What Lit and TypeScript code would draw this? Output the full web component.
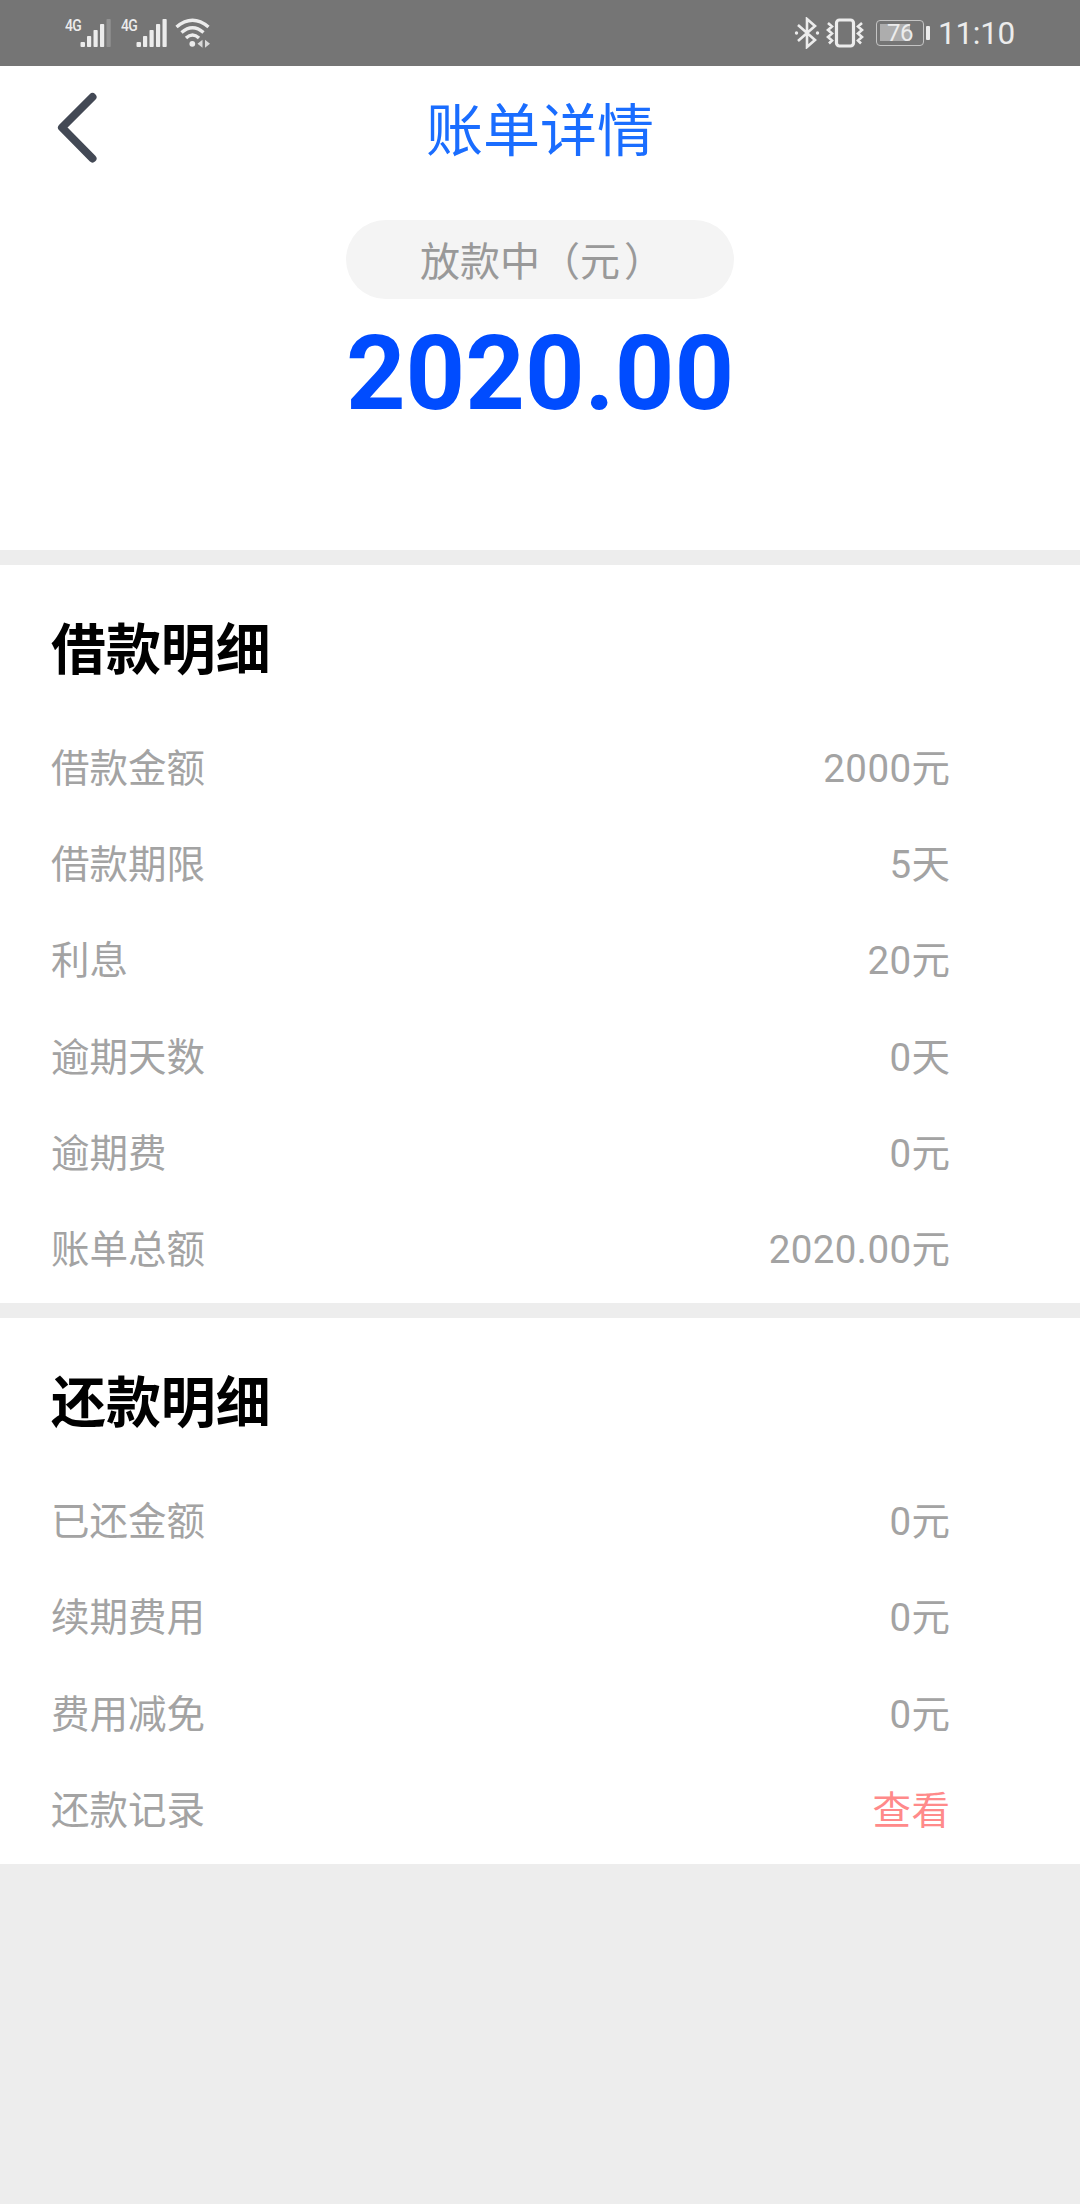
import { LitElement, html, css, svg } from "lit";
import { customElement, property } from "lit/decorators.js";

interface Item {
  label: string;
  value: string;
  link?: boolean;
}

const loanItems: Item[] = [
  { label: "借款金额", value: "2000元" },
  { label: "借款期限", value: "5天" },
  { label: "利息", value: "20元" },
  { label: "逾期天数", value: "0天" },
  { label: "逾期费", value: "0元" },
  { label: "账单总额", value: "2020.00元" },
];

const repayItems: Item[] = [
  { label: "已还金额", value: "0元" },
  { label: "续期费用", value: "0元" },
  { label: "费用减免", value: "0元" },
  { label: "还款记录", value: "查看", link: true },
];

const signalBars = (weakLast: boolean) => svg`
  <rect x="0.5" y="23" width="4.5" height="5" rx="1"></rect>
  <rect x="7" y="17" width="4.2" height="11" rx="0.8"></rect>
  <rect x="13.5" y="11" width="4.2" height="17" rx="0.8"></rect>
  <rect x="20" y="5" width="4.2" height="23" rx="0.8"></rect>
  <rect x="26.5" y="0" width="4.2" height="28" rx="0.8" opacity=${weakLast ? 0.25 : 1}></rect>`;

@customElement("status-bar")
export class StatusBar extends LitElement {
  static styles = css`
    :host {
      display: flex;
      justify-content: space-between;
      box-sizing: border-box;
      height: 66px;
      padding: 0 65px 0 65px;
      background: #757575;
      color: #ececec;
      font-family: Roboto, "Noto Sans CJK SC", sans-serif;
    }
    .group {
      display: flex;
      align-items: center;
    }
    svg {
      display: block;
      fill: #ececec;
    }
    .net {
      width: 15px;
      margin: 0 0 16px 0;
      font-size: 17px;
      line-height: 18px;
      font-weight: 500;
      letter-spacing: -0.8px;
      white-space: nowrap;
      transform: scaleX(0.82);
      transform-origin: left;
    }
    .bars {
      width: 32px;
      height: 28px;
    }
    .second {
      margin-left: 9px;
    }
    .wifi {
      margin-left: 7px;
      width: 36px;
      height: 30px;
    }
    .line {
      fill: none;
      stroke: #ececec;
    }
    .vibrate {
      margin-left: 5px;
    }
    .battery {
      display: grid;
      place-items: center;
      box-sizing: border-box;
      width: 48px;
      height: 26px;
      margin-left: 11px;
      border: 1.5px solid #c4c4c4;
      border-radius: 4px;
      background: linear-gradient(90deg, #adadad 76%, transparent 76%) 3px 3px / 40px 17px no-repeat;
      font-size: 24px;
      line-height: 24px;
      letter-spacing: -0.5px;
    }
    .tip {
      width: 4px;
      height: 14px;
      margin-left: 2px;
      border-radius: 1px;
      background: #ececec;
    }
    .time {
      margin-left: 8px;
      font-size: 31.5px;
      line-height: 66px;
      padding-top: 1px;
      box-sizing: border-box;
      height: 66px;
      letter-spacing: -0.3px;
    }
  `;

  render() {
    return html`
      <div class="group">
        <span class="net">4G</span>
        <svg class="bars" viewBox="0 0 32 28">${signalBars(true)}</svg>
        <span class="net second">4G</span>
        <svg class="bars" viewBox="0 0 32 28">${signalBars(false)}</svg>
        <svg class="wifi" viewBox="0 0 36 30">
          <g class="line" stroke-width="3.4">
            <path d="M1.5 9Q17.500-4.500 33.500 9"></path>
            <path d="M6.500 14.500Q17.500 5 28.500 14.500"></path>
            <path d="M11 20Q17.500 14 24 20"></path>
          </g>
          <circle cx="17.300" cy="25.800" r="2.900"></circle>
          <path d="M22.500 25.800l5-4v8zM35 25.800l-5-4v8z" opacity="0.85"></path>
        </svg>
      </div>
      <div class="group">
        <svg width="26" height="32" viewBox="0 0 26 32">
          <path class="line" stroke-width="2.600" d="M4 8l17 15-8 7V2l8 7L4 24"></path>
          <circle cx="2.500" cy="16" r="1.700"></circle>
          <circle cx="23.500" cy="16" r="1.700"></circle>
        </svg>
        <svg class="vibrate" width="40" height="32" viewBox="0 0 40 32">
          <rect class="line" stroke-width="3.200" x="11.500" y="3" width="17" height="26" rx="3"></rect>
          <path class="line" stroke-width="2.600" d="M3 6l4 3.500-4 3.500 4 3.500-4 3.500 4 3.500-3 3M37 6l-4 3.500 4 3.500-4 3.500 4 3.500-4 3.500 3 3"></path>
        </svg>
        <span class="battery">76</span>
        <span class="tip"></span>
        <span class="time">11:10</span>
      </div>
    `;
  }
}

@customElement("detail-section")
export class DetailSection extends LitElement {
  @property() heading = "";
  @property({ attribute: false }) items: Item[] = [];

  static styles = css`
    :host {
      display: block;
      box-sizing: border-box;
      padding: 0 130px 9px 51px;
      background: #fff;
    }
    .heading {
      margin: 0;
      height: 152px;
      line-height: 170px;
      font-size: 54.9px;
      font-weight: 700;
      color: #000;
    }
    .row {
      display: flex;
      justify-content: space-between;
      align-items: center;
      height: 96.2px;
      font-size: 38.5px;
      color: #a3a3a3;
    }
    .value {
      letter-spacing: 0.4px;
      margin-right: -0.4px;
    }
    .link {
      color: #ff8a8a;
    }
  `;

  render() {
    return html`
      <h2 class="heading">${this.heading}</h2>
      ${this.items.map(
        (item) => html`
          <div class="row">
            <span>${item.label}</span>
            <span class="value ${item.link ? "link" : ""}">${item.value}</span>
          </div>
        `,
      )}
    `;
  }
}

@customElement("app-root")
export class AppRoot extends LitElement {
  static styles = css`
    :host {
      display: flex;
      flex-direction: column;
      width: 1080px;
      height: 2204px;
      overflow: hidden;
      background: #ededed;
      font-family: Roboto, "Noto Sans CJK SC", sans-serif;
    }
    .summary {
      display: flex;
      flex-direction: column;
      align-items: center;
      height: 484px;
      margin-bottom: 15px;
      background: #fff;
    }
    .nav {
      display: grid;
      grid-template-columns: 1fr auto 1fr;
      align-items: center;
      width: 100%;
      height: 123px;
    }
    .back {
      display: block;
      margin-left: 53px;
      fill: none;
      stroke: #434955;
      stroke-width: 8;
      stroke-linecap: round;
      stroke-linejoin: round;
    }
    .title {
      margin: 0;
      padding-top: 9px;
      font-size: 57px;
      line-height: 80px;
      font-weight: 400;
      color: #1a6dff;
    }
    .pill {
      width: 388px;
      height: 79px;
      margin-top: 31px;
      border-radius: 40px;
      background: #f4f4f4;
      text-align: center;
      font-size: 40px;
      line-height: 86px;
      color: #999;
    }
    .close {
      padding-left: 4px;
      margin-right: -4px;
    }
    .amount {
      font-size: 104px;
      line-height: 120px;
      margin-top: 15px;
      font-weight: 700;
      color: #004cff;
    }
    .repay {
      margin-top: 15px;
    }
  `;

  render() {
    return html`
      <status-bar></status-bar>
      <div class="summary">
        <div class="nav">
          <svg class="back" width="48" height="78" viewBox="0 0 48 78">
            <path d="M39.500 8L9 38.500 39.500 69.500"></path>
          </svg>
          <h1 class="title">账单详情</h1>
        </div>
        <div class="pill">放款中（元<span class="close">）</span></div>
        <div class="amount">2020.00</div>
      </div>
      <detail-section heading="借款明细" .items=${loanItems}></detail-section>
      <detail-section class="repay" heading="还款明细" .items=${repayItems}></detail-section>
    `;
  }
}
